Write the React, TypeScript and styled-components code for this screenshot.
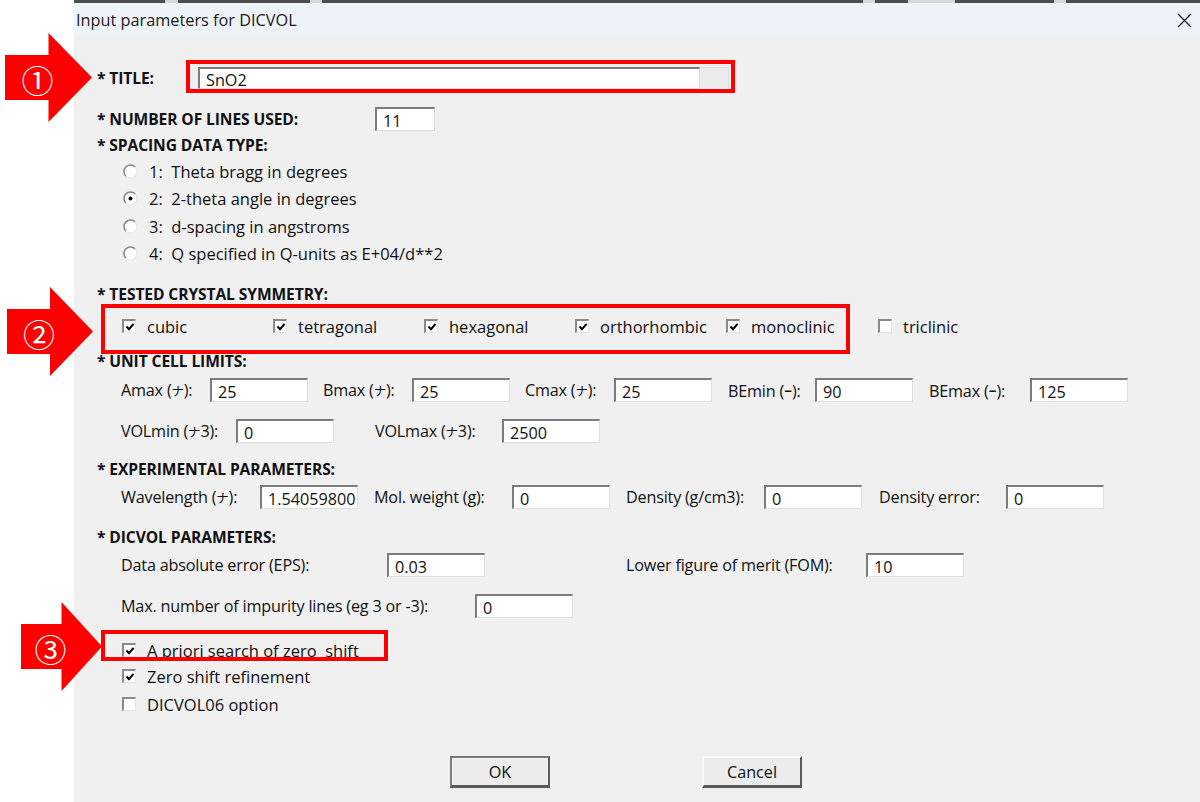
import React from "react";
import styled, { createGlobalStyle } from "styled-components";

const UI_FONT = `"Open Sans", "Noto Sans CJK JP", sans-serif`;

const GlobalStyle = createGlobalStyle`
  html, body {
    margin: 0;
    padding: 0;
    background: #ffffff;
  }
  body {
    font-family: ${UI_FONT};
    color: #111;
  }
`;

const Page = styled.div`
  position: relative;
  display: flex;
  width: 1200px;
  height: 802px;
  overflow: hidden;
  background: #ffffff;
`;

const Gutter = styled.div`
  flex: none;
  width: 74px;
  background: #ffffff;
`;

const Dialog = styled.div`
  flex: 1;
  display: flex;
  flex-direction: column;
  background: #f0f0f0;
`;

/* strip of the window behind the dialog */
const BackStrip = styled.div`
  height: 3px;
  background: linear-gradient(
    to right,
    #4d4d4d 0 91px,
    #d6d6d6 91px 104px,
    #4d4d4d 104px 236px,
    #d6d6d6 236px 248px,
    #4d4d4d 248px 789px,
    #d6d6d6 789px 801px,
    #4d4d4d 801px 834px,
    #d6d6d6 834px 881px,
    #4d4d4d 881px 980px,
    #d6d6d6 980px 992px,
    #4d4d4d 992px
  );
`;

const TitleBar = styled.div`
  height: 34px;
  display: flex;
  align-items: center;
  justify-content: space-between;
  padding: 0 8px 0 2px;
  background: #eef3f9;
  font-size: 16.3px;
  color: #1a1a1a;
`;

const CloseButton = styled.span`
  display: flex;
  width: 16px;
  height: 16px;
  align-items: center;
  justify-content: center;
`;

const Body = styled.div`
  display: flex;
  flex-direction: column;
  padding: 27px 0 0 23px;
`;

const Row = styled.div<{ $h?: number; $mt?: number; $indent?: number }>`
  display: flex;
  align-items: center;
  height: ${(p) => p.$h ?? 28}px;
  margin-top: ${(p) => p.$mt ?? 0}px;
  padding-left: ${(p) => p.$indent ?? 0}px;
  font-size: 16.5px;
  white-space: pre;
`;

const Heading = styled(Row)`
  font-size: 15.6px;
  font-weight: 700;
  letter-spacing: -0.1px;
`;

const Label = styled.span<{ $w: number; $bold?: boolean }>`
  flex: none;
  width: ${(p) => p.$w}px;
  font-size: ${(p) => (p.$bold ? 15.6 : 16.2)}px;
  font-weight: ${(p) => (p.$bold ? 700 : 400)};
  letter-spacing: ${(p) => (p.$bold ? -0.1 : -0.2)}px;
`;

/* the Å sign shown through the Japanese code page */
const Kana = styled.span`
  font-family: "Noto Sans CJK JP", sans-serif;
  font-size: 12.5px;
`;

const Field = styled.input<{ $w?: number; $h?: number; $gap?: number }>`
  flex: none;
  box-sizing: border-box;
  width: ${(p) => p.$w ?? 98}px;
  height: ${(p) => p.$h ?? 24}px;
  margin: 0 ${(p) => p.$gap ?? 0}px 0 0;
  padding: 2px 0 0 6px;
  background: #ffffff;
  border-top: 2px solid #7c7c7c;
  border-left: 2px solid #7c7c7c;
  border-right: 1px solid #dedede;
  border-bottom: 1px solid #dedede;
  font-family: ${UI_FONT};
  font-size: 16.2px;
  color: #111;
  outline: none;
`;

const TitleField = styled.div`
  display: flex;
  height: 22px;
`;

const TitleTail = styled.span`
  width: 28px;
  background: #ececec;
  border-top: 1px solid #dcdcdc;
  border-right: 1px solid #dcdcdc;
`;

const Option = styled.label<{ $w?: number }>`
  display: flex;
  align-items: center;
  gap: 11px;
  width: ${(p) => (p.$w ? `${p.$w}px` : "auto")};
  flex: none;
  font-size: 16.5px;
`;

const Box = styled.span`
  box-sizing: border-box;
  flex: none;
  display: flex;
  align-items: center;
  justify-content: center;
  width: 14px;
  height: 14px;
  background: #ffffff;
  border-top: 2px solid #8a8a8a;
  border-left: 2px solid #8a8a8a;
  border-right: 1px solid #e4e4e4;
  border-bottom: 1px solid #e4e4e4;
`;

const Spacer = styled.span<{ $w: number }>`
  flex: none;
  width: ${(p) => p.$w}px;
`;

const ButtonBar = styled.div`
  display: flex;
  margin-top: 39px;
  padding-left: 353px;
  gap: 152px;
`;

const Button = styled.button<{ $primary?: boolean }>`
  box-sizing: border-box;
  width: 100px;
  height: 32px;
  padding: 0;
  background: #ececec;
  font-family: ${UI_FONT};
  font-size: 16.2px;
  color: #111;
  border-top: 2px solid ${(p) => (p.$primary ? "#7a7a7a" : "#fafafa")};
  border-left: 2px solid ${(p) => (p.$primary ? "#7a7a7a" : "#fafafa")};
  border-right: 2px solid #5a5a5a;
  border-bottom: 3px solid #5a5a5a;
  box-shadow: ${(p) => (p.$primary ? "inset 1px 1px 0 #fafafa" : "none")};
`;

/* red call-outs laid over the dialog */
const Frame = styled.div<{ $x: number; $y: number; $w: number; $h: number }>`
  position: absolute;
  left: ${(p) => p.$x}px;
  top: ${(p) => p.$y}px;
  width: ${(p) => p.$w}px;
  height: ${(p) => p.$h}px;
  box-sizing: border-box;
  border: 4px solid #ff0000;
  pointer-events: none;
`;

const ArrowSvg = styled.svg<{ $x: number; $y: number }>`
  position: absolute;
  left: ${(p) => p.$x}px;
  top: ${(p) => p.$y}px;
  overflow: visible;
`;

const Check = () => (
  <svg width="10" height="10" viewBox="0 0 10 10">
    <polyline points="1.5,4.5 4,7.2 8.6,1.8" fill="none" stroke="#000" strokeWidth="2" />
  </svg>
);

const CheckBox: React.FC<{ checked?: boolean; label: string; w?: number }> = ({ checked, label, w }) => (
  <Option $w={w}>
    <Box>{checked && <Check />}</Box>
    <span>{label}</span>
  </Option>
);

const Radio: React.FC<{ selected?: boolean; label: string }> = ({ selected, label }) => (
  <Option>
    <svg width="15" height="15" viewBox="0 0 15 15">
      <circle cx="7.5" cy="7.5" r="6.5" fill="#fff" />
      <path d="M2.9 12.1 A6.5 6.5 0 0 1 12.1 2.9" fill="none" stroke="#8a8a8a" strokeWidth="1.6" />
      <path d="M12.1 2.9 A6.5 6.5 0 0 1 2.9 12.1" fill="none" stroke="#e6e6e6" strokeWidth="1.2" />
      {selected && <circle cx="7.5" cy="7.5" r="2" fill="#000" />}
    </svg>
    <span>{label}</span>
  </Option>
);

const Arrow: React.FC<{ x: number; y: number; w: number; n: string }> = ({ x, y, w, n }) => {
  const neck = w * 0.5;
  return (
    <ArrowSvg $x={x} $y={y} width={w} height={89} viewBox={`0 0 ${w} 89`}>
      <polygon
        points={`0,22 ${neck},22 ${neck},0 ${w},44.5 ${neck},89 ${neck},67 0,67`}
        fill="#ff0000"
      />
      <text
        x={neck - 11}
        y={46}
        fill="#ffffff"
        fontSize="32"
        fontFamily={`"Noto Sans CJK JP", sans-serif`}
        textAnchor="middle"
        dominantBaseline="central"
      >
        {n}
      </text>
    </ArrowSvg>
  );
};

const crystal = ["cubic", "tetragonal", "hexagonal", "orthorhombic", "monoclinic"];

const App: React.FC = () => {
  return (
    <Page>
      <GlobalStyle />
      <Gutter />
      <Dialog>
        <BackStrip />
        <TitleBar>
          <span>Input parameters for DICVOL</span>
          <CloseButton>
            <svg width="15" height="15" viewBox="0 0 15 15">
              <path d="M1 1 L14 14 M14 1 L1 14" stroke="#1a1a1a" strokeWidth="1.3" />
            </svg>
          </CloseButton>
        </TitleBar>

        <Body>
          <Row>
            <Label $w={101} $bold>* TITLE:</Label>
            <TitleField>
              <Field $w={502} $h={22} readOnly defaultValue="SnO2" />
              <TitleTail />
            </TitleField>
          </Row>
          <Row $mt={13}>
            <Label $w={278} $bold>* NUMBER OF LINES USED:</Label>
            <Field $w={60} readOnly defaultValue="11" />
          </Row>

          <Heading $h={20} $mt={2}>* SPACING DATA TYPE:</Heading>
          <Row $h={26} $mt={3} $indent={26}>
            <Radio label="1:  Theta bragg in degrees" />
          </Row>
          <Row $h={26} $mt={1} $indent={26}>
            <Radio selected label="2:  2-theta angle in degrees" />
          </Row>
          <Row $h={26} $mt={2} $indent={26}>
            <Radio label="3:  d-spacing in angstroms" />
          </Row>
          <Row $h={26} $mt={1} $indent={26}>
            <Radio label="4:  Q specified in Q-units as E+04/d**2" />
          </Row>

          <Heading $h={20} $mt={18}>* TESTED CRYSTAL SYMMETRY:</Heading>
          <Row $h={26} $mt={9} $indent={25}>
            {crystal.map((c) => (
              <CheckBox key={c} checked label={c} w={c === "monoclinic" ? 125 : 151} />
            ))}
            <Spacer $w={27} />
            <CheckBox label="triclinic" />
          </Row>

          <Heading $h={20} $mt={12}>* UNIT CELL LIMITS:</Heading>
          <Row $mt={5} $indent={24}>
            <Label $w={89}>Amax (<Kana>ナ</Kana>):</Label>
            <Field $gap={15} readOnly defaultValue="25" />
            <Label $w={89}>Bmax (<Kana>ナ</Kana>):</Label>
            <Field $gap={15} readOnly defaultValue="25" />
            <Label $w={89}>Cmax (<Kana>ナ</Kana>):</Label>
            <Field $gap={16} readOnly defaultValue="25" />
            <Label $w={87}>BEmin (ｰ):</Label>
            <Field $gap={16} readOnly defaultValue="90" />
            <Label $w={101}>BEmax (ｰ):</Label>
            <Field readOnly defaultValue="125" />
          </Row>
          <Row $mt={13} $indent={24}>
            <Label $w={115}>VOLmin (<Kana>ナ</Kana>3):</Label>
            <Field $gap={41} readOnly defaultValue="0" />
            <Label $w={127}>VOLmax (<Kana>ナ</Kana>3):</Label>
            <Field readOnly defaultValue="2500" />
          </Row>

          <Heading $h={20} $mt={14}>* EXPERIMENTAL PARAMETERS:</Heading>
          <Row $mt={4} $indent={24}>
            <Label $w={139}>Wavelength (<Kana>ナ</Kana>):</Label>
            <Field $gap={16} readOnly defaultValue="1.54059800" />
            <Label $w={138}>Mol. weight (g):</Label>
            <Field $gap={16} readOnly defaultValue="0" />
            <Label $w={138}>Density (g/cm3):</Label>
            <Field $gap={17} readOnly defaultValue="0" />
            <Label $w={127}>Density error:</Label>
            <Field readOnly defaultValue="0" />
          </Row>

          <Heading $h={20} $mt={16}>* DICVOL PARAMETERS:</Heading>
          <Row $mt={4} $indent={24}>
            <Label $w={266}>Data absolute error (EPS):</Label>
            <Field $gap={141} readOnly defaultValue="0.03" />
            <Label $w={240}>Lower figure of merit (FOM):</Label>
            <Field readOnly defaultValue="10" />
          </Row>
          <Row $mt={13} $indent={24}>
            <Label $w={354}>Max. number of impurity lines (eg 3 or -3):</Label>
            <Field readOnly defaultValue="0" />
          </Row>

          <Row $h={26} $mt={17} $indent={25}>
            <CheckBox checked label="A priori search of zero  shift" />
          </Row>
          <Row $h={26} $indent={25}>
            <CheckBox checked label="Zero shift refinement" />
          </Row>
          <Row $h={26} $mt={2} $indent={25}>
            <CheckBox label="DICVOL06 option" />
          </Row>

          <ButtonBar>
            <Button $primary>OK</Button>
            <Button>Cancel</Button>
          </ButtonBar>
        </Body>
      </Dialog>

      <Frame $x={186} $y={60} $w={549} $h={33} />
      <Frame $x={101} $y={304} $w={749} $h={50} />
      <Frame $x={101} $y={630} $w={287} $h={31} />

      <Arrow x={5} y={33} w={87} n="①" />
      <Arrow x={7} y={287} w={86} n="②" />
      <Arrow x={21} y={602} w={81} n="③" />
    </Page>
  );
};

export default App;
